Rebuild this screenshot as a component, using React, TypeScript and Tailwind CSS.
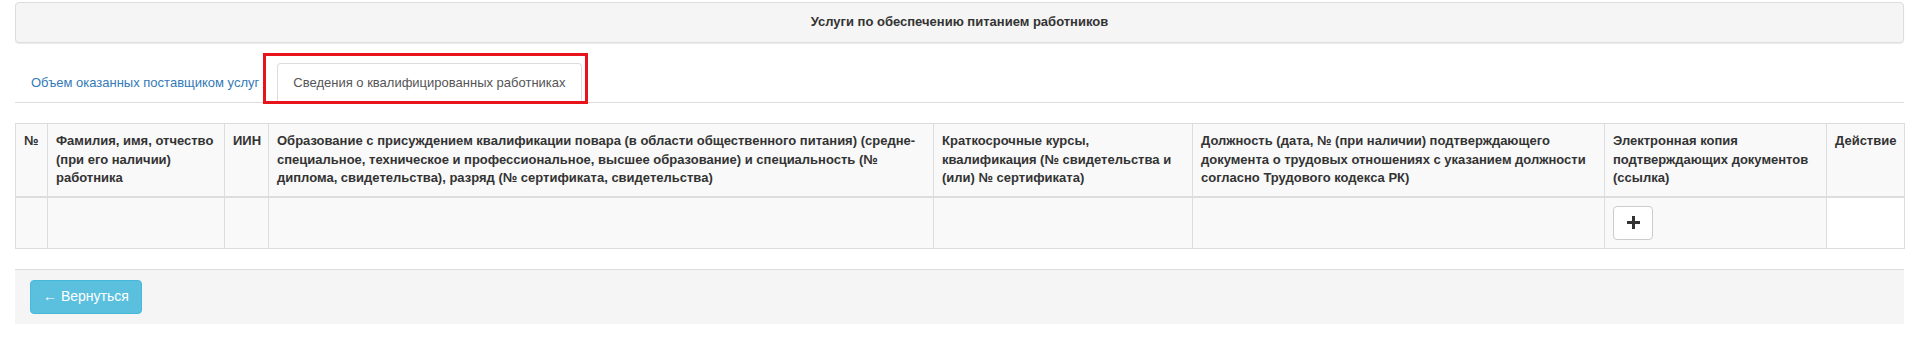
const headers = [
  { w: 'w-[32px]', text: <>№</> },
  { w: 'w-[177px]', text: <>Фамилия, имя, отчество<br />(при его наличии)<br />работника</> },
  { w: 'w-[44px]', text: <>ИИН</> },
  {
    w: 'w-[665px]',
    text: (
      <>
        Образование с присуждением квалификации повара (в области общественного питания) (средне-
        <br />
        специальное, техническое и профессиональное, высшее образование) и специальность (№
        <br />
        диплома, свидетельства), разряд (№ сертификата, свидетельства)
      </>
    ),
  },
  { w: 'w-[259px]', text: <>Краткосрочные курсы,<br />квалификация (№ свидетельства и<br />(или) № сертификата)</> },
  {
    w: 'w-[412px]',
    text: (
      <>
        Должность (дата, № (при наличии) подтверждающего
        <br />
        документа о трудовых отношениях с указанием должности
        <br />
        согласно Трудового кодекса РК)
      </>
    ),
  },
  { w: 'w-[222px]', text: <>Электронная копия<br />подтверждающих документов<br />(ссылка)</> },
  { w: 'w-[78px]', text: <>Действие</> },
]

export default function App() {
  return (
    <div className="min-h-[349px] bg-white px-[15px] pt-[2px] font-['Liberation_Sans',Arial,sans-serif] text-[13px] leading-[1.42857] text-[#333]">
      <div className="mb-[20px] rounded border border-[#ddd] bg-[#f5f5f5] py-[10px] text-center font-bold shadow-[0_1px_1px_rgba(0,0,0,0.08)]">
        Услуги по обеспечению питанием работников
      </div>

      <ul className="mb-[20px] flex border-b border-[#ddd]">
        <li className="-mb-px">
          <a className="mr-[2px] block rounded-t border border-transparent px-[15px] py-[10px] text-[#337ab7]">
            Объем оказанных поставщиком услуг
          </a>
        </li>
        <li className="relative -mb-px">
          <a className="mr-[2px] block rounded-t border border-[#ddd] border-b-transparent bg-white px-[15px] py-[10px] text-[#555]">
            Сведения о квалифицированных работниках
          </a>
          <div className="pointer-events-none absolute -top-[10px] -right-[4px] -bottom-[1px] -left-[14px] border-[3px] border-[#e8141b]" />
        </li>
      </ul>

      <table className="mb-[20px] w-full table-fixed border-collapse border border-[#ddd]">
        <thead>
          <tr className="bg-[#f9f9f9]">
            {headers.map((h, i) => (
              <th
                key={i}
                className={`${h.w} border border-b-2 border-[#ddd] p-[8px] text-left align-top font-bold`}
              >
                {h.text}
              </th>
            ))}
          </tr>
        </thead>
        <tbody>
          <tr>
            <td className="border border-[#ddd] bg-[#f9f9f9] p-[8px]"></td>
            <td className="border border-[#ddd] bg-[#f9f9f9] p-[8px]"></td>
            <td className="border border-[#ddd] bg-[#f9f9f9] p-[8px]"></td>
            <td className="border border-[#ddd] bg-[#f9f9f9] p-[8px]"></td>
            <td className="border border-[#ddd] bg-[#f9f9f9] p-[8px]"></td>
            <td className="border border-[#ddd] bg-[#f9f9f9] p-[8px]"></td>
            <td className="border border-[#ddd] bg-[#f9f9f9] p-[8px]">
              <button className="flex h-[34px] w-[40px] items-center justify-center rounded border border-[#ccc] bg-white">
                <svg width="13" height="13" viewBox="0 0 13 13" fill="#333">
                  <rect x="5" y="0" width="3" height="13" />
                  <rect x="0" y="5" width="13" height="3" />
                </svg>
              </button>
            </td>
            <td className="border border-[#ddd] bg-white p-[8px]"></td>
          </tr>
        </tbody>
      </table>

      <div className="border-t border-[#ddd] bg-[#f5f5f5] px-[15px] py-[10px]">
        <button className="h-[34px] rounded border border-[#46b8da] bg-[#5bc0de] px-[12px] text-[14px] text-white">
          ← Вернуться
        </button>
      </div>
    </div>
  )
}
